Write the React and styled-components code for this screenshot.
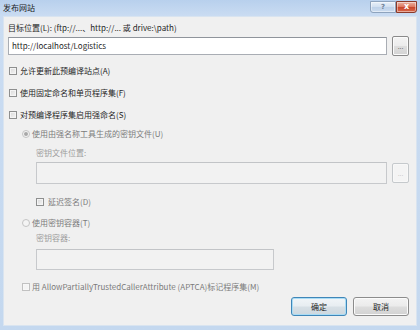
import React from 'react';
import styled, { createGlobalStyle } from 'styled-components';

const Global = createGlobalStyle`
  html, body { margin: 0; padding: 0; background: #ffffff; }
  body { font-family: "Noto Sans CJK SC", "Noto Sans", sans-serif; }
  #root { width: 420px; height: 330px; }
`;

const Window = styled.div`
  width: 420px;
  height: 330px;
  box-sizing: border-box;
  display: flex;
  flex-direction: column;
  background: linear-gradient(180deg, #b8d0ed 0px, #cadcf2 16px, #c4d8ef 100%);
  font-size: 8px;
  line-height: 10px;
  color: #1f1f1f;
`;

const TitleBar = styled.div`
  height: 16px;
  flex: none;
  display: flex;
  justify-content: space-between;
  align-items: flex-start;
  padding: 0 3px 0 3px;
`;

const Title = styled.div`
  margin-top: 3px;
  font-size: 8px;
  line-height: 10px;
  color: #1a1a1a;
`;

const Caption = styled.div`
  display: flex;
  margin-top: 1px;
`;

const CapButton = styled.div`
  width: ${p => p.$w}px;
  height: 12px;
  box-sizing: border-box;
  display: flex;
  align-items: center;
  justify-content: center;
  font-family: "DejaVu Sans", sans-serif;
  font-weight: bold;
  font-size: ${p => (p.$close ? 8 : 7)}px;
  line-height: 1;
  color: ${p => (p.$close ? '#ffffff' : '#6f8198')};
  border: 1px solid ${p => (p.$close ? '#8b3a2a' : '#8ea3bd')};
  border-radius: ${p => (p.$close ? '0 0 3px 0' : '0 0 0 3px')};
  background: ${p =>
    p.$close
      ? 'linear-gradient(180deg, #eab2a2 0%, #df7c63 45%, #c9482d 55%, #d8684a 100%)'
      : 'linear-gradient(180deg, #e8f0f9 0%, #d3e1f1 45%, #bfd2e9 55%, #cbdcef 100%)'};
  box-shadow: inset 0 0 0 1px rgba(255, 255, 255, 0.45);
`;

const Frame = styled.div`
  flex: 1;
  display: flex;
  padding: 0 3px 4px 3px;
  min-height: 0;
`;

const Content = styled.div`
  flex: 1;
  box-sizing: border-box;
  background: #f0f0f0;
  border: 1px solid #d9e4f0;
  padding: 6px 7px 0 4px;
  display: flex;
  flex-direction: column;
`;

const Label = styled.div`
  margin-top: ${p => p.$mt || 0}px;
  margin-left: ${p => p.$indent || 0}px;
  height: 10px;
  line-height: 10px;
  white-space: nowrap;
  color: ${p => p.$color || '#1f1f1f'};
`;

const FieldRow = styled.div`
  margin-top: ${p => p.$mt || 0}px;
  margin-left: ${p => p.$indent || 0}px;
  height: ${p => p.$h}px;
  display: flex;
  align-items: center;
  gap: 5px;
`;

const TextBox = styled.div`
  box-sizing: border-box;
  height: ${p => p.$h}px;
  ${p => (p.$w ? `width: ${p.$w}px; flex: none;` : 'flex: 1;')}
  border: 1px solid ${p => (p.$disabled ? '#c7c9cc' : '#a9adb4')};
  border-top-color: ${p => (p.$disabled ? '#c2c4c7' : '#8f949b')};
  background: ${p => (p.$disabled ? '#f2f2f2' : '#ffffff')};
  padding-left: 3px;
  display: flex;
  align-items: center;
  color: #1f1f1f;
  white-space: nowrap;
`;

const Browse = styled.div`
  box-sizing: border-box;
  width: 17px;
  height: 20px;
  flex: none;
  border: 1px solid ${p => (p.$disabled ? '#c5c9cc' : '#8a8a8a')};
  border-radius: 2px;
  background: ${p =>
    p.$disabled
      ? '#f4f4f4'
      : 'linear-gradient(180deg, #f4f4f4 0%, #ececec 48%, #dedede 52%, #d3d3d3 100%)'};
  box-shadow: inset 0 0 0 1px ${p => (p.$disabled ? '#f8f8f8' : '#fbfbfb')};
  display: flex;
  align-items: center;
  justify-content: center;
  font-family: "DejaVu Sans", sans-serif;
  font-size: 6px;
  line-height: 1;
  padding-top: 2px;
  color: ${p => (p.$disabled ? '#b5b5b5' : '#2a2a2a')};
`;

const CheckRow = styled.div`
  margin-top: ${p => p.$mt || 0}px;
  margin-left: ${p => p.$indent || 0}px;
  height: 12px;
  display: flex;
  align-items: center;
  gap: ${p => p.$gap || 3}px;
  white-space: nowrap;
  color: ${p => p.$color || '#1f1f1f'};
`;

const Box = styled.span`
  box-sizing: border-box;
  width: 8px;
  height: 8px;
  flex: none;
  border: 1px solid ${p => (p.$disabled ? '#c1c1c1' : '#8e8f8f')};
  background: ${p =>
    p.$disabled ? '#f4f4f4' : 'linear-gradient(135deg, #d8d8d8 0%, #f6f6f6 100%)'};
  box-shadow: inset 0 0 0 1px ${p => (p.$disabled ? '#f7f7f7' : '#f4f4f4')};
`;

const Radio = styled.span`
  box-sizing: border-box;
  width: 8px;
  height: 8px;
  flex: none;
  border-radius: 50%;
  border: 1px solid #c4c4c4;
  background: #f4f4f4;
  display: flex;
  align-items: center;
  justify-content: center;
  &::after {
    content: '';
    display: ${p => (p.$checked ? 'block' : 'none')};
    width: 4px;
    height: 4px;
    border-radius: 50%;
    background: #a8a8a8;
  }
`;

const ButtonRow = styled.div`
  margin-top: ${p => p.$mt || 0}px;
  display: flex;
  justify-content: flex-end;
  gap: 6px;
`;

const DlgButton = styled.div`
  box-sizing: border-box;
  width: 56px;
  height: 19px;
  border-radius: 3px;
  border: 1px solid ${p => (p.$default ? '#3f86b8' : '#8c8c8c')};
  background: ${p =>
    p.$default
      ? 'linear-gradient(180deg, #f1f5f8 0%, #e7edf1 48%, #d7e0e6 52%, #cdd7de 100%)'
      : 'linear-gradient(180deg, #f3f3f3 0%, #ebebeb 48%, #dddddd 52%, #d2d2d2 100%)'};
  box-shadow: inset 0 0 0 1px ${p => (p.$default ? '#a9dcf5' : '#fbfbfb')};
  display: flex;
  align-items: center;
  justify-content: center;
  color: #1f1f1f;
`;

export default function App() {
  const dis = '#7b7b7b';
  const sub = '#9c9c9c';
  return (
    <>
      <Global />
      <Window>
        <TitleBar>
          <Title>发布网站</Title>
          <Caption>
            <CapButton $w={26}>?</CapButton>
            <CapButton $w={21} $close>x</CapButton>
          </Caption>
        </TitleBar>
        <Frame>
          <Content>
            <Label>目标位置(L): (ftp://...、http://... 或 drive:\path)</Label>
            <FieldRow $mt={3} $h={20}>
              <TextBox $h={18}>http://localhost/Logistics</TextBox>
              <Browse>...</Browse>
            </FieldRow>

            <CheckRow $mt={9} $indent={1}>
              <Box />
              允许更新此预编译站点(A)
            </CheckRow>
            <CheckRow $mt={10} $indent={1}>
              <Box />
              使用固定命名和单页程序集(F)
            </CheckRow>
            <CheckRow $mt={10} $indent={1}>
              <Box />
              对预编译程序集启用强命名(S)
            </CheckRow>

            <CheckRow $mt={7} $indent={14} $gap={2} $color={dis}>
              <Radio $checked />
              使用由强名称工具生成的密钥文件(U)
            </CheckRow>
            <Label $mt={8} $indent={28} $color={sub}>密钥文件位置:</Label>
            <FieldRow $mt={4} $indent={28} $h={22}>
              <TextBox $h={22} $disabled />
              <Browse $disabled>...</Browse>
            </FieldRow>
            <CheckRow $mt={12} $indent={28} $gap={4} $color={dis}>
              <Box />
              延迟签名(D)
            </CheckRow>

            <CheckRow $mt={9} $indent={14} $gap={2} $color={dis}>
              <Radio />
              使用密钥容器(T)
            </CheckRow>
            <Label $mt={4} $indent={28} $color={sub}>密钥容器:</Label>
            <FieldRow $mt={6} $indent={28} $h={21}>
              <TextBox $h={21} $w={238} $disabled />
            </FieldRow>

            <CheckRow $mt={11} $indent={14} $gap={2} $color={dis}>
              <Box $disabled />
              用 AllowPartiallyTrustedCallerAttribute (APTCA)标记程序集(M)
            </CheckRow>

            <ButtonRow $mt={4}>
              <DlgButton $default>确定</DlgButton>
              <DlgButton>取消</DlgButton>
            </ButtonRow>
          </Content>
        </Frame>
      </Window>
    </>
  );
}
